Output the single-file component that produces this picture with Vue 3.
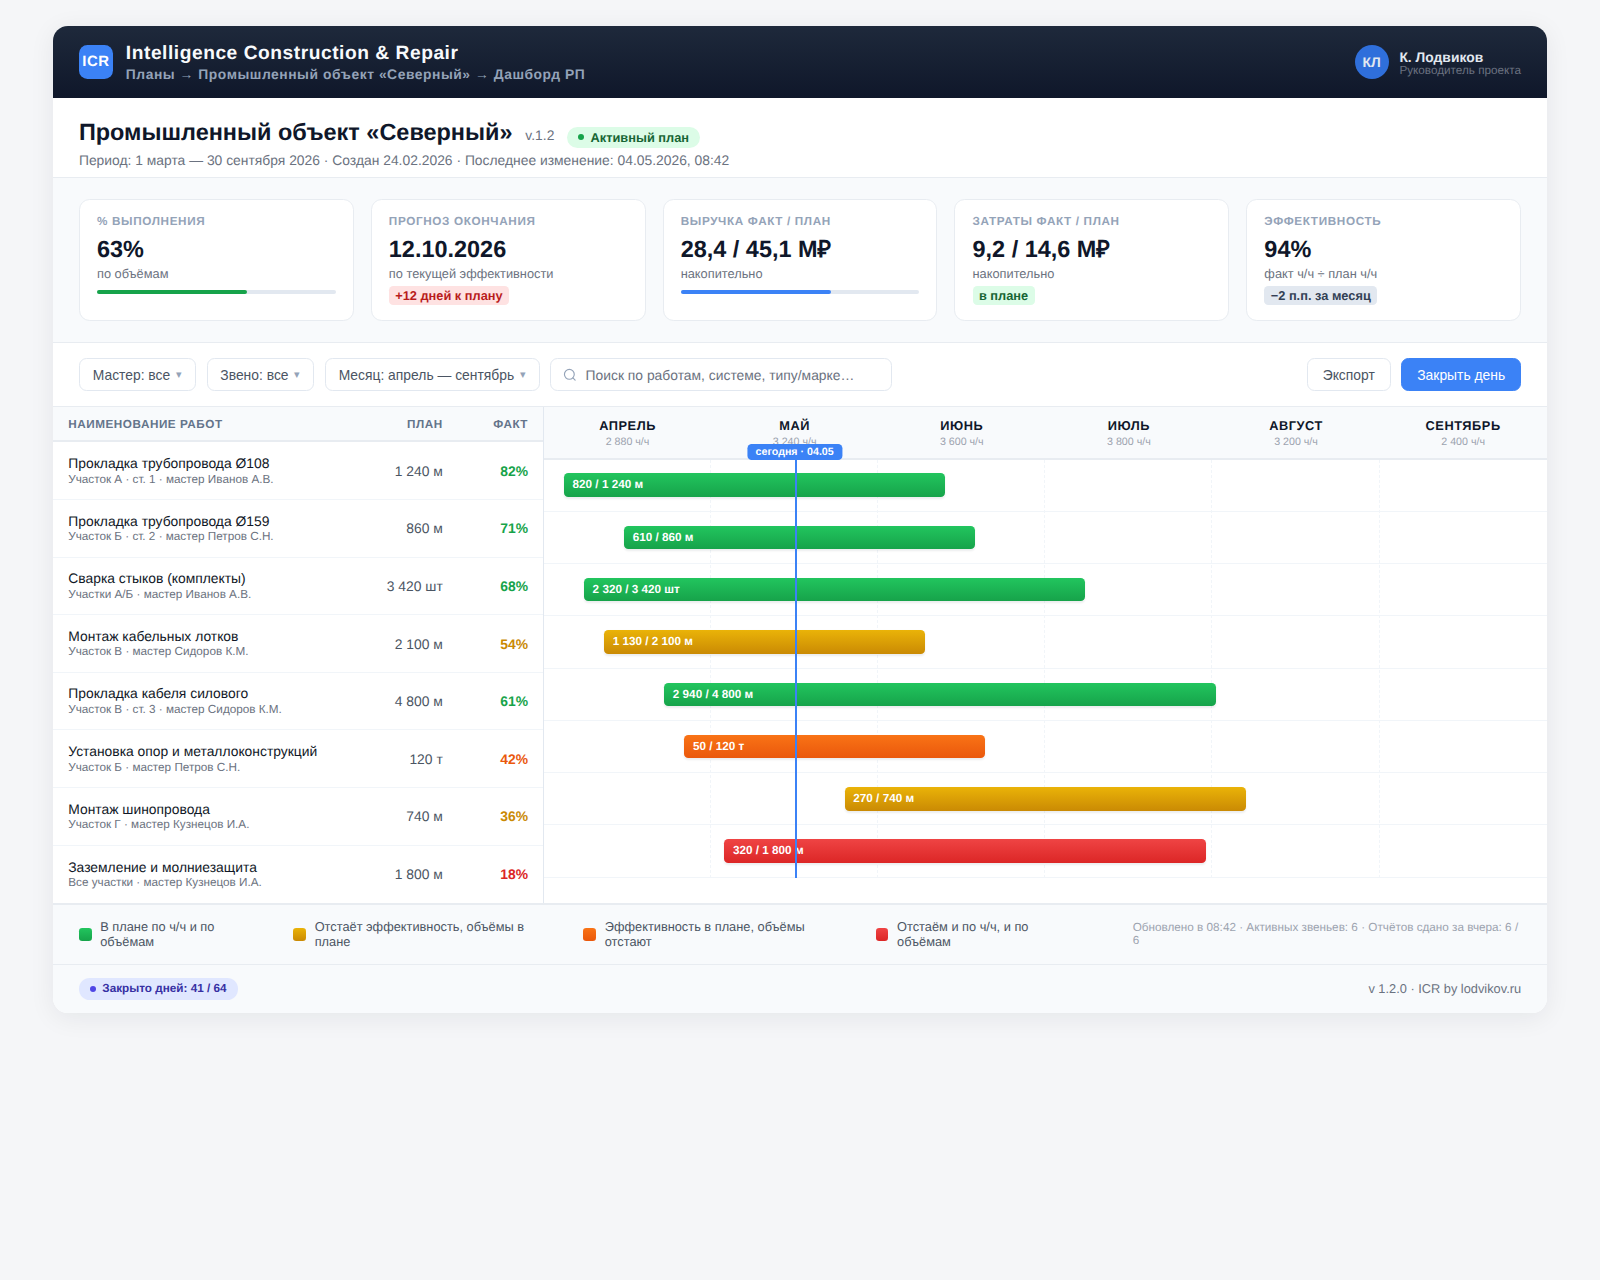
<script setup>
const kpis = [
  { label: "% выполнения", value: "63%", sub: "по объёмам", bar: 63, barClass: "fill-green" },
  { label: "Прогноз окончания", value: "12.10.2026", sub: "по текущей эффективности", tag: "+12 дней к плану", tagClass: "tag-red" },
  { label: "Выручка факт / план", value: "28,4 / 45,1 М₽", sub: "накопительно", bar: 63, barClass: "fill-blue" },
  { label: "Затраты факт / план", value: "9,2 / 14,6 М₽", sub: "накопительно", tag: "в плане", tagClass: "tag-green" },
  { label: "Эффективность", value: "94%", sub: "факт ч/ч ÷ план ч/ч", tag: "−2 п.п. за месяц", tagClass: "tag-gray" },
];

const months = [
  { name: "Апрель", hours: "2 880 ч/ч" },
  { name: "Май", hours: "3 240 ч/ч" },
  { name: "Июнь", hours: "3 600 ч/ч" },
  { name: "Июль", hours: "3 800 ч/ч" },
  { name: "Август", hours: "3 200 ч/ч" },
  { name: "Сентябрь", hours: "2 400 ч/ч" },
];

// start and width of a bar are percents of the whole timeline
const works = [
  { name: "Прокладка трубопровода Ø108", info: "Участок А · ст. 1 · мастер Иванов А.В.", plan: "1 240 м", fact: 82, status: "green", label: "820 / 1 240 м", start: 2, width: 38 },
  { name: "Прокладка трубопровода Ø159", info: "Участок Б · ст. 2 · мастер Петров С.Н.", plan: "860 м", fact: 71, status: "green", label: "610 / 860 м", start: 8, width: 35 },
  { name: "Сварка стыков (комплекты)", info: "Участки А/Б · мастер Иванов А.В.", plan: "3 420 шт", fact: 68, status: "green", label: "2 320 / 3 420 шт", start: 4, width: 50 },
  { name: "Монтаж кабельных лотков", info: "Участок В · мастер Сидоров К.М.", plan: "2 100 м", fact: 54, status: "yellow", label: "1 130 / 2 100 м", start: 6, width: 32 },
  { name: "Прокладка кабеля силового", info: "Участок В · ст. 3 · мастер Сидоров К.М.", plan: "4 800 м", fact: 61, status: "green", label: "2 940 / 4 800 м", start: 12, width: 55 },
  { name: "Установка опор и металлоконструкций", info: "Участок Б · мастер Петров С.Н.", plan: "120 т", fact: 42, status: "orange", label: "50 / 120 т", start: 14, width: 30 },
  { name: "Монтаж шинопровода", info: "Участок Г · мастер Кузнецов И.А.", plan: "740 м", fact: 36, status: "yellow", label: "270 / 740 м", start: 30, width: 40 },
  { name: "Заземление и молниезащита", info: "Все участки · мастер Кузнецов И.А.", plan: "1 800 м", fact: 18, status: "red", label: "320 / 1 800 м", start: 18, width: 48 },
];

const legend = [
  { status: "green", text: "В плане по ч/ч и по объёмам" },
  { status: "yellow", text: "Отстаёт эффективность, объёмы в плане" },
  { status: "orange", text: "Эффективность в плане, объёмы отстают" },
  { status: "red", text: "Отстаём и по ч/ч, и по объёмам" },
];
</script>

<template>
  <div class="page">
    <div class="shell">
      <header class="topbar">
        <div class="brand">
          <div class="logo">ICR</div>
          <div class="brand-text">
            <div class="brand-title">Intelligence Construction &amp; Repair</div>
            <div class="crumbs">Планы → Промышленный объект «Северный» → Дашборд РП</div>
          </div>
        </div>
        <div class="user">
          <div class="avatar">КЛ</div>
          <div class="user-text">
            <div class="user-name">К. Лодвиков</div>
            <div class="user-role">Руководитель проекта</div>
          </div>
        </div>
      </header>

      <section class="plan-head">
        <div class="plan-title-row">
          <h1>Промышленный объект «Северный»</h1>
          <span class="version">v.1.2</span>
          <span class="active-pill"><i></i>Активный план</span>
        </div>
        <div class="plan-meta">Период: 1 марта — 30 сентября 2026 · Создан 24.02.2026 · Последнее изменение: 04.05.2026, 08:42</div>
      </section>

      <section class="kpis">
        <div v-for="kpi in kpis" :key="kpi.label" class="kpi">
          <div class="kpi-label">{{ kpi.label }}</div>
          <div class="kpi-value">{{ kpi.value }}</div>
          <div class="kpi-sub">{{ kpi.sub }}</div>
          <div v-if="kpi.bar" class="track">
            <div class="fill" :class="kpi.barClass" :style="{ width: kpi.bar + '%' }"></div>
          </div>
          <span v-if="kpi.tag" class="tag" :class="kpi.tagClass">{{ kpi.tag }}</span>
        </div>
      </section>

      <section class="toolbar">
        <button class="select">Мастер: все <span class="caret">▾</span></button>
        <button class="select">Звено: все <span class="caret">▾</span></button>
        <button class="select">Месяц: апрель — сентябрь <span class="caret">▾</span></button>
        <div class="search">
          <svg width="13" height="13" viewBox="0 0 24 24" fill="none" stroke="#94a3b8" stroke-width="2" stroke-linecap="round">
            <circle cx="11" cy="11" r="8.5" />
            <path d="M21 21l-3.8-3.8" />
          </svg>
          <span>Поиск по работам, системе, типу/марке…</span>
        </div>
        <div class="toolbar-actions">
          <button class="btn">Экспорт</button>
          <button class="btn btn-primary">Закрыть день</button>
        </div>
      </section>

      <section class="board">
        <div class="works">
          <div class="works-head">
            <div class="col-name">Наименование работ</div>
            <div class="col-plan">План</div>
            <div class="col-fact">Факт</div>
          </div>
          <div v-for="work in works" :key="work.name" class="work-row">
            <div class="col-name">
              <div class="work-name">{{ work.name }}</div>
              <div class="work-info">{{ work.info }}</div>
            </div>
            <div class="col-plan">{{ work.plan }}</div>
            <div class="col-fact" :class="'text-' + work.status">{{ work.fact }}%</div>
          </div>
        </div>

        <div class="gantt">
          <div class="gantt-head">
            <div v-for="month in months" :key="month.name" class="month">
              <div class="month-name">{{ month.name }}</div>
              <div class="month-hours">{{ month.hours }}</div>
            </div>
          </div>
          <div class="gantt-body">
            <div class="grid-lines">
              <div v-for="month in months" :key="month.name"></div>
            </div>
            <div v-for="work in works" :key="work.name" class="gantt-row">
              <div
                class="bar"
                :class="'bg-' + work.status"
                :style="{ marginLeft: work.start + '%', width: work.width + '%' }"
              >{{ work.label }}</div>
            </div>
            <div class="today">
              <div class="today-label">сегодня · 04.05</div>
            </div>
          </div>
        </div>
      </section>

      <section class="legend">
        <div v-for="item in legend" :key="item.status" class="legend-item">
          <span class="swatch" :class="'bg-' + item.status"></span>
          <span>{{ item.text }}</span>
        </div>
        <div class="legend-status">Обновлено в 08:42 · Активных звеньев: 6 · Отчётов сдано за вчера: 6 / 6</div>
      </section>

      <footer class="footer">
        <span class="closed-pill"><i></i>Закрыто дней: 41 / 64</span>
        <span class="footer-note">v 1.2.0 · ICR by lodvikov.ru</span>
      </footer>
    </div>
  </div>
</template>

<style scoped>
/* the layout is a 1500px design shown a bit larger in the 1600px window */
.page {
  zoom: 1.06667;
  padding: 24px 50px;
  font-family: "Liberation Sans", Arial, sans-serif;
  text-rendering: geometricPrecision;
  color: #0f172a;
}
.shell {
  background: #fff;
  border-radius: 14px;
  overflow: hidden;
  box-shadow: 0 4px 24px rgba(15, 23, 42, 0.07);
}

.topbar {
  height: 68px;
  box-sizing: border-box;
  padding: 0 24px;
  display: flex;
  align-items: center;
  justify-content: space-between;
  background: linear-gradient(180deg, #1e293b, #0f172a);
}
.brand,
.user {
  display: flex;
  align-items: center;
}
.brand {
  gap: 12px;
}
.user {
  gap: 10px;
}
.brand-text {
  margin-top: 1px;
}
.user-text {
  margin-top: 2px;
}
.logo {
  width: 32px;
  height: 32px;
  border-radius: 8px;
  background: #3b82f6;
  color: #fff;
  font-size: 14px;
  font-weight: 700;
  letter-spacing: 0.5px;
  display: flex;
  align-items: center;
  justify-content: center;
}
.brand-title {
  color: #f8fafc;
  font-size: 18px;
  font-weight: 700;
  letter-spacing: 0.5px;
  line-height: 21px;
}
.crumbs {
  color: #94a3b8;
  font-size: 13px;
  font-weight: 700;
  letter-spacing: 0.5px;
  line-height: 15px;
}
.avatar {
  width: 32px;
  height: 32px;
  border-radius: 50%;
  background: #2f6fdb;
  color: #e2e8f0;
  font-size: 13px;
  font-weight: 700;
  display: flex;
  align-items: center;
  justify-content: center;
}
.user-name {
  color: #e2e8f0;
  font-size: 13px;
  font-weight: 700;
  line-height: 15px;
}
.user-role {
  color: #6b7280;
  font-size: 11px;
  line-height: 12px;
}

.plan-head {
  height: 75px;
  box-sizing: border-box;
  padding: 20px 24px 0;
  border-bottom: 1px solid #e8ecf1;
}
.plan-title-row {
  display: flex;
  align-items: baseline;
  gap: 12px;
}
h1 {
  margin: 0;
  font-size: 22px;
  font-weight: 700;
  line-height: 26px;
  color: #0f172a;
}
.version {
  color: #6b7280;
  font-size: 13px;
}
.active-pill {
  display: inline-flex;
  align-items: center;
  gap: 6px;
  padding: 3px 10px;
  border-radius: 10px;
  background: #dcfce7;
  color: #166534;
  font-size: 12px;
  font-weight: 700;
}
.active-pill i {
  width: 6px;
  height: 6px;
  border-radius: 50%;
  background: #16a34a;
}
.plan-meta {
  margin-top: 4px;
  color: #6b7280;
  font-size: 13px;
  line-height: 15px;
}

.kpis {
  display: grid;
  grid-template-columns: repeat(5, 1fr);
  gap: 16px;
  padding: 20px 24px;
  background: #f8fafc;
  border-bottom: 1px solid #e8ecf1;
}
.kpi {
  height: 114px;
  box-sizing: border-box;
  padding: 14px 16px;
  background: #fff;
  border: 1px solid #e8ecf1;
  border-radius: 10px;
}
.kpi-label {
  color: #94a3b8;
  font-size: 11px;
  font-weight: 700;
  letter-spacing: 0.6px;
  text-transform: uppercase;
  line-height: 13px;
}
.kpi-value {
  margin-top: 6px;
  font-size: 22px;
  font-weight: 700;
  line-height: 26px;
  color: #0f172a;
}
.kpi-sub {
  margin-top: 3px;
  color: #6b7280;
  font-size: 12px;
  line-height: 14px;
}
.track {
  margin-top: 8px;
  height: 4px;
  border-radius: 2px;
  background: #e2e8f0;
}
.fill {
  height: 100%;
  border-radius: 2px;
}
.fill-green {
  background: #16a34a;
}
.fill-blue {
  background: #3b82f6;
}
.tag {
  display: inline-block;
  margin-top: 4px;
  padding: 0 6px;
  height: 18px;
  line-height: 18px;
  border-radius: 4px;
  font-size: 12px;
  font-weight: 700;
}
.tag-red {
  background: #fee2e2;
  color: #b91c1c;
}
.tag-green {
  background: #dcfce7;
  color: #166534;
}
.tag-gray {
  background: #e2e8f0;
  color: #334155;
}

.toolbar {
  display: flex;
  align-items: center;
  gap: 10px;
  padding: 14px 24px;
  border-bottom: 1px solid #e8ecf1;
}
.select,
.btn,
.search {
  height: 31px;
  box-sizing: border-box;
  border: 1px solid #e2e8f0;
  border-radius: 7px;
  background: #fff;
  font-family: inherit;
  font-size: 13px;
  color: #4b5563;
}
.select {
  padding: 0 12px;
  display: flex;
  align-items: center;
  gap: 5.5px;
}
.caret {
  color: #94a3b8;
  font-size: 10px;
}
.search {
  width: 320px;
  padding: 0 11px;
  display: flex;
  align-items: center;
  gap: 8px;
  color: #6b7280;
}
.toolbar-actions {
  margin-left: auto;
  display: flex;
  gap: 10px;
}
.btn {
  padding: 0 14px;
}
.btn-primary {
  background: #3b82f6;
  border-color: #3b82f6;
  color: #fff;
}

.board {
  display: grid;
  grid-template-columns: 460px 1fr;
  border-bottom: 2px solid #e8ecf1;
}
.works {
  border-right: 1px solid #e2e8f0;
}
.works-head {
  height: 33px;
  box-sizing: border-box;
  display: flex;
  align-items: center;
  padding: 1px 14px 0;
  background: #f8fafc;
  border-bottom: 2px solid #e8ecf1;
  color: #64748b;
  font-size: 11px;
  font-weight: 700;
  letter-spacing: 0.5px;
  text-transform: uppercase;
}
.work-row {
  height: 54px;
  box-sizing: border-box;
  display: flex;
  align-items: center;
  padding: 0 14px;
  border-bottom: 1px solid #f1f5f9;
}
.work-row:last-child {
  border-bottom: none;
}
.col-name {
  flex: 1;
}
.col-plan {
  width: 100px;
  text-align: right;
}
.col-fact {
  width: 80px;
  text-align: right;
}
.work-row .col-plan {
  color: #4b5563;
  font-size: 13px;
}
.work-row .col-fact {
  font-size: 13px;
  font-weight: 700;
}
.work-name {
  font-size: 13px;
  line-height: 15px;
  color: #111827;
}
.work-info {
  margin-top: 1.5px;
  font-size: 11px;
  line-height: 13px;
  color: #6b7280;
}
.text-green {
  color: #16a34a;
}
.text-yellow {
  color: #ca8a04;
}
.text-orange {
  color: #ea580c;
}
.text-red {
  color: #dc2626;
}

.gantt-head {
  height: 49px;
  box-sizing: border-box;
  display: grid;
  grid-template-columns: repeat(6, 1fr);
  background: #f8fafc;
  border-bottom: 2px solid #e8ecf1;
}
.month {
  text-align: center;
  padding-top: 11px;
}
.month-name {
  font-size: 12px;
  font-weight: 700;
  letter-spacing: 0.5px;
  text-transform: uppercase;
  line-height: 14px;
  color: #0f172a;
}
.month-hours {
  font-size: 10px;
  line-height: 12px;
  margin-top: 2px;
  color: #9ca3af;
}
.gantt-body {
  position: relative;
}
.grid-lines {
  position: absolute;
  top: 0;
  left: 0;
  right: 0;
  bottom: 0;
  display: grid;
  grid-template-columns: repeat(6, 1fr);
}
.grid-lines div {
  border-right: 1px dashed #f1f5f9;
}
.grid-lines div:last-child {
  border-right: none;
}
.gantt-row {
  position: relative;
  height: 49px;
  box-sizing: border-box;
  display: flex;
  align-items: center;
  border-bottom: 1px solid #f1f5f9;
}
.bar {
  height: 22px;
  line-height: 22px;
  box-sizing: border-box;
  padding-left: 8px;
  border-radius: 4px;
  color: #fff;
  font-size: 11px;
  font-weight: 700;
  white-space: nowrap;
  box-shadow: 0 1px 2px rgba(15, 23, 42, 0.08);
}
.bg-green {
  background: linear-gradient(180deg, #22c55e, #16a34a);
}
.bg-yellow {
  background: linear-gradient(180deg, #eab308, #ca8a04);
}
.bg-orange {
  background: linear-gradient(180deg, #f97316, #ea580c);
}
.bg-red {
  background: linear-gradient(180deg, #ef4444, #dc2626);
}
.today {
  position: absolute;
  top: 0;
  bottom: 0;
  left: 25%;
  width: 2.5px;
  background: #3b82f6;
}
.today-label {
  position: absolute;
  top: -15px;
  left: 0;
  transform: translateX(-50%);
  height: 15px;
  line-height: 15px;
  padding: 0 8px;
  border-radius: 4px;
  background: #3b82f6;
  color: #fff;
  font-size: 10px;
  font-weight: 700;
  white-space: nowrap;
}

.legend {
  height: 56px;
  box-sizing: border-box;
  display: grid;
  grid-template-columns: 181px 252px 254px 221px 1fr;
  gap: 20px;
  align-items: center;
  padding: 0 24px;
  background: #f8fafc;
  border-bottom: 1px solid #e8ecf1;
  color: #4b5563;
  font-size: 12px;
  line-height: 14px;
}
.legend-item {
  display: flex;
  align-items: center;
  gap: 8px;
  padding-right: 30px;
}
.swatch {
  flex: none;
  width: 12px;
  height: 12px;
  border-radius: 3px;
}
.legend-status {
  color: #9ca3af;
  font-size: 11px;
  line-height: 12px;
}

.footer {
  height: 45px;
  box-sizing: border-box;
  display: flex;
  align-items: center;
  justify-content: space-between;
  padding: 0 24px;
  background: #f8fafc;
}
.closed-pill {
  display: inline-flex;
  align-items: center;
  gap: 6px;
  height: 20px;
  padding: 0 11px 0 10px;
  border-radius: 10px;
  background: #e0e7ff;
  color: #3730a3;
  font-size: 11px;
  font-weight: 700;
}
.closed-pill i {
  width: 6px;
  height: 6px;
  border-radius: 50%;
  background: #4f46e5;
}
.footer-note {
  color: #6b7280;
  font-size: 12px;
}
</style>

<style>
html,
body {
  background: #f5f6f8;
}
</style>
